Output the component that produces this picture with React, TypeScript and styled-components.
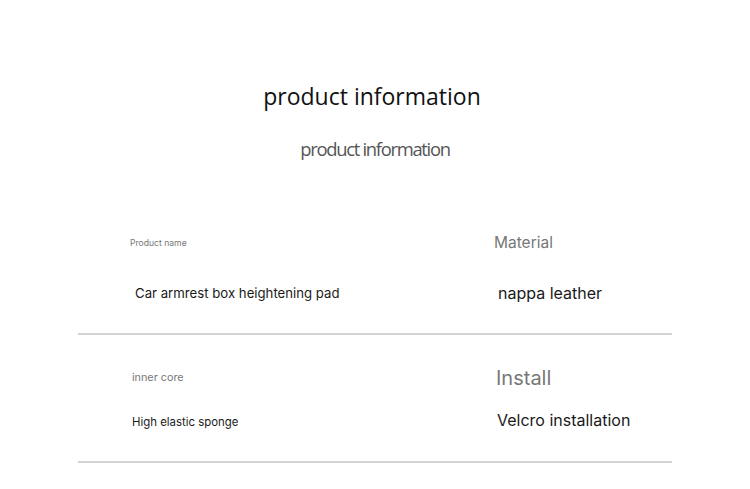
import React from "react";
import styled, { createGlobalStyle } from "styled-components";

const Global = createGlobalStyle`
  html, body { margin: 0; padding: 0; background: #fff; }
  body { font-family: "Open Sans", "Liberation Sans", sans-serif; }
`;

const Page = styled.div`
  width: 750px;
  height: 489px;
  background: #fff;
  display: flex;
  flex-direction: column;
  align-items: center;
  padding-top: 81px;
  box-sizing: border-box;
`;

const Title = styled.h1`
  margin: 0 6px 0 0;
  font-family: "Open Sans", sans-serif;
  font-weight: 400;
  font-size: 23px;
  line-height: 30px;
  color: #111;
`;

const Subtitle = styled.h2`
  margin: 25px 0 0;
  font-family: "Open Sans", sans-serif;
  font-weight: 500;
  font-size: 18.4px;
  line-height: 26px;
  letter-spacing: -1.3px;
  color: #555;
`;

const Table = styled.div`
  width: 594px;
  margin-top: 72px;
  display: flex;
  flex-direction: column;
`;

const Row = styled.div<{ $h: number }>`
  height: ${(p) => p.$h}px;
  display: grid;
  grid-template-columns: 416px 1fr;
  border-bottom: 2px solid #d4d4d4;
  box-sizing: border-box;
`;

const Cell = styled.div<{ $pl: number; $gap: number; $pt: number }>`
  padding-left: ${(p) => p.$pl}px;
  padding-top: ${(p) => p.$pt}px;
  display: flex;
  flex-direction: column;
  gap: ${(p) => p.$gap}px;
`;

const Label = styled.div<{ $size: number }>`
  font-family: "Inter", "Liberation Sans", sans-serif;
  font-size: ${(p) => p.$size}px;
  line-height: 1.2;
  color: #777;
`;

const Value = styled.div<{ $size: number; $ml?: number }>`
  font-family: "Inter", "Liberation Sans", sans-serif;
  font-size: ${(p) => p.$size}px;
  line-height: 1.2;
  color: #1a1a1a;
  margin-left: ${(p) => p.$ml ?? 0}px;
`;

export default function App() {
  return (
    <>
      <Global />
      <Page>
        <Title>product information</Title>
        <Subtitle>product information</Subtitle>
        <Table>
          <Row $h={101}>
            <Cell $pl={52} $pt={4} $gap={38}>
              <Label $size={8.6}>Product name</Label>
              <Value $size={13.2} $ml={5}>Car armrest box heightening pad</Value>
            </Cell>
            <Cell $pl={0} $pt={-3} $gap={31}>
              <Label $size={15.5}>Material</Label>
              <Value $size={16} $ml={4}>nappa leather</Value>
            </Cell>
          </Row>
          <Row $h={128}>
            <Cell $pl={54} $pt={37} $gap={31}>
              <Label $size={10.8}>inner core</Label>
              <Value $size={11.4}>High elastic sponge</Value>
            </Cell>
            <Cell $pl={2} $pt={31} $gap={21}>
              <Label $size={20}>Install</Label>
              <Value $size={16} $ml={1}>Velcro installation</Value>
            </Cell>
          </Row>
        </Table>
      </Page>
    </>
  );
}
